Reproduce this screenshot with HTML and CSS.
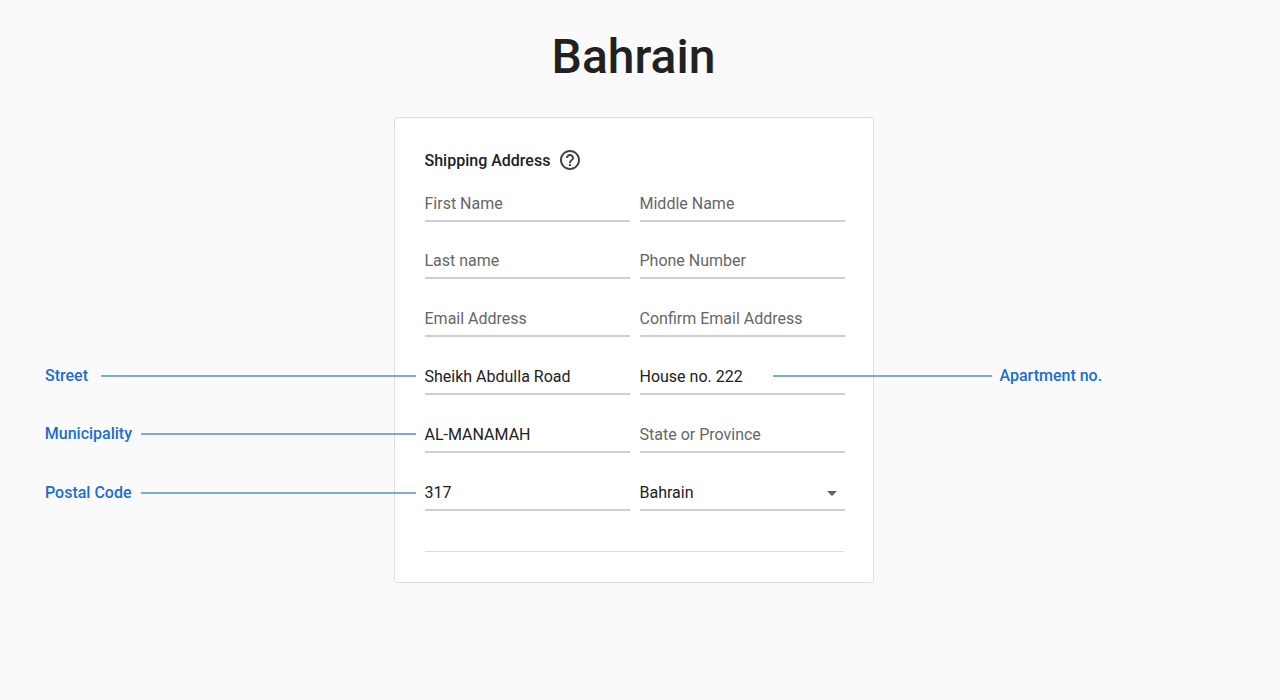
FILE: index.html
```html
<!DOCTYPE html>
<html lang="en">
<head>
<meta charset="utf-8">
<title>Bahrain</title>
<link rel="stylesheet" href="styles.css">
</head>
<body>
<main class="page">
  <h1 class="title">Bahrain</h1>
  <section class="card">
    <div class="card-head">
      <h2 class="card-title">Shipping Address</h2>
      <svg class="help" viewBox="0 0 24 24" width="24" height="24" aria-hidden="true"><path d="M11 18h2v-2h-2v2zm1-16C6.48 2 2 6.48 2 12s4.48 10 10 10 10-4.48 10-10S17.52 2 12 2zm0 18c-4.41 0-8-3.59-8-8s3.59-8 8-8 8 3.59 8 8-3.59 8-8 8zm0-14c-2.21 0-4 1.79-4 4h2c0-1.1.9-2 2-2s2 .9 2 2c0 2-3 1.75-3 5h2c0-2.25 3-2.5 3-5 0-2.21-1.79-4-4-4z"/></svg>
    </div>
    <div class="fields">
      <div class="field placeholder">First Name</div>
      <div class="field placeholder">Middle Name</div>
      <div class="field placeholder">Last name</div>
      <div class="field placeholder">Phone Number</div>
      <div class="field placeholder">Email Address</div>
      <div class="field placeholder">Confirm Email Address</div>
      <div class="field">Sheikh Abdulla Road
        <div class="note note-street"><span class="note-label">Street</span><span class="note-line"></span></div>
      </div>
      <div class="field">House no. 222
        <div class="note note-apartment"><span class="note-line"></span><span class="note-label">Apartment no.</span></div>
      </div>
      <div class="field">AL-MANAMAH
        <div class="note note-municipality"><span class="note-label">Municipality</span><span class="note-line"></span></div>
      </div>
      <div class="field placeholder">State or Province</div>
      <div class="field">317
        <div class="note note-postal"><span class="note-label">Postal Code</span><span class="note-line"></span></div>
      </div>
      <div class="field select">Bahrain<span class="caret"></span></div>
    </div>
    <hr class="divider">
  </section>
</main>
</body>
</html>
```
FILE: styles.css
```css
* { box-sizing: border-box; }
html, body { margin: 0; height: 100%; }
body {
  background: #fafafa;
  color: #212121;
  font-family: Roboto, "Liberation Sans", sans-serif;
  overflow: hidden;
}
.page {
  width: 1267px;
  display: flex;
  flex-direction: column;
  align-items: center;
}
.title {
  margin: 0;
  padding-top: 29px;
  height: 117px;
  font-size: 48px;
  line-height: 56px;
  font-weight: 500;
  color: #212121;
}
.card {
  width: 480px;
  height: 466px;
  padding: 30px 29px 0 30px;
  background: #fff;
  border: 1px solid #dcdfe3;
  border-radius: 3px;
}
.card-head {
  display: flex;
  align-items: center;
  gap: 8px;
  height: 26px;
}
.card-title {
  margin: 0;
  font-size: 16px;
  font-weight: 500;
  line-height: 26px;
  color: #212121;
}
.help { fill: #424242; margin-bottom: 2px; }
.fields {
  display: grid;
  grid-template-columns: 205px 205px;
  column-gap: 10px;
  grid-template-rows: 57px repeat(5, 58px);
  margin-top: 6px;
}
.field {
  position: relative;
  height: 42px;
  padding-top: 11px;
  font-size: 16px;
  line-height: 26px;
  color: #212121;
  border-bottom: 2px solid #cfcfcf;
}
.placeholder { color: #666; }
.select { display: flex; justify-content: space-between; }
.caret {
  width: 0;
  height: 0;
  margin: 11px 8px 0 0;
  border-left: 5px solid transparent;
  border-right: 5px solid transparent;
  border-top: 5px solid #616161;
}
.divider {
  margin: 24px 0 0;
  border: 0;
  border-top: 1px solid #dcdcdc;
}
.note {
  position: absolute;
  top: 10px;
  height: 26px;
  display: flex;
  align-items: center;
  color: #1c6dd0;
  font-size: 16px;
  font-weight: 500;
}
.note-street { right: 214px; }
.note-municipality { right: 214px; }
.note-postal { right: 214px; top: 11px; }
.note-apartment { left: 133px; }
.note-label { white-space: nowrap; }
.note-line { display: block; height: 2px; background: #7fa9d8; }
.note-street .note-line { width: 315px; margin-left: 12.5px; }
.note-municipality .note-line { width: 275px; margin-left: 8.5px; }
.note-postal .note-line { width: 275px; margin-left: 9px; }
.note-apartment .note-line { width: 219px; margin-right: 8px; }
```
